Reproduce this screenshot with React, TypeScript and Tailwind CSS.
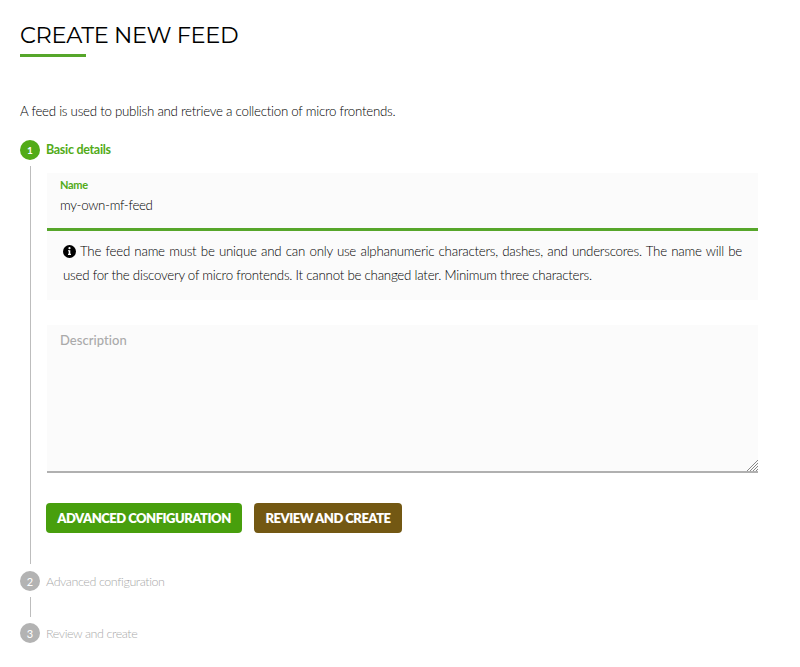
import { useState } from 'react';

interface StepProps {
  index: number;
  title: string;
}

function PendingStep({ index, title }: StepProps) {
  return (
    <div className="flex h-[20px] items-center gap-[6px]">
      <span className="flex size-[20px] items-center justify-center rounded-full bg-[#b3b3b3] text-[11px] leading-none text-white">
        {index}
      </span>
      <span className="pt-px text-[12.5px] leading-[18px] font-light tracking-[-0.41px] text-[#aaa]">{title}</span>
    </div>
  );
}

function InfoIcon() {
  return (
    <svg viewBox="0 0 13 13" className="mr-[4px] inline-block size-[13px] align-[-2px]">
      <circle cx="6.5" cy="6.5" r="6.5" fill="#000" />
      <circle cx="6.5" cy="3.2" r="1.1" fill="#fff" />
      <path d="M5 5.2h2.3v3.6H8v1.1H5V8.8h.7V6.3H5z" fill="#fff" />
    </svg>
  );
}

export default function App() {
  const [feedName, setFeedName] = useState<string>('my-own-mf-feed');
  const [description, setDescription] = useState<string>('');

  return (
    <div className="h-[667px] w-[800px] overflow-hidden bg-white pl-[20px] font-[Lato,sans-serif] text-black">
      <h1 className="h-[54px] pt-[18px] font-[Montserrat,sans-serif] text-[22.5px] leading-[34px] tracking-[-0.35px] whitespace-nowrap">
        CREATE NEW FEED
      </h1>
      <div className="h-[3px] w-[66px] bg-[#56a62a]" />
      <p className="mt-[44px] text-[13.3px] leading-[20px] font-light tracking-[-0.255px]">
        A feed is used to publish and retrieve a collection of micro frontends.
      </p>

      <div className="mt-[19px] flex h-[20px] items-center gap-[6px]">
        <span className="flex size-[20px] items-center justify-center rounded-full bg-[#52ab18] text-[10px] font-bold text-white">
          1
        </span>
        <span className="text-[12.5px] font-bold tracking-[-0.3px] text-[#52ab18]">Basic details</span>
      </div>

      <div className="mt-[6px] ml-[10px] h-[398px] border-l border-[#bdbdbd] pt-[7px] pl-[16px]">
        <label className="block h-[58px] w-[711px] border-b-[3px] border-[#56a62a] bg-[#fbfbfb] px-[13px] pt-[5px]">
          <span className="block text-[11px] leading-[14px] font-bold tracking-[-0.3px] text-[#52ab18]">Name</span>
          <input
            value={feedName}
            onChange={(e) => setFeedName(e.target.value)}
            className="block h-[26px] w-full text-[13.3px] font-light tracking-[-0.32px] outline-none"
          />
        </label>
        <p className="h-[69px] w-[711px] bg-[#fbfbfb] px-[16px] pt-[8px] text-justify text-[13.3px] leading-[24px] font-light tracking-[-0.24px]">
          <InfoIcon />
          The feed name must be unique and can only use alphanumeric characters, dashes, and underscores. The name will be
          used for the discovery of micro frontends. It cannot be changed later. Minimum three characters.
        </p>
        <div className="relative mt-[25px] h-[148px] w-[711px]">
          <textarea
            value={description}
            onChange={(e) => setDescription(e.target.value)}
            placeholder="Description"
            className="block h-[148px] w-full resize-none border-b-2 border-[#b0b0b0] bg-[#fbfbfb] px-[13px] pt-[6px] text-[13px] font-medium tracking-[0.05px] outline-none placeholder:text-[#aaa]"
          />
          <svg viewBox="0 0 12 12" className="absolute right-0 bottom-[2px] size-[12px]">
            <path d="M1 12L12 1M4 12l8-8M7 12l5-5M10 12l2-2" stroke="#888" strokeWidth="1" fill="none" />
          </svg>
        </div>
        <div className="mt-[30px] -ml-px flex gap-[12px] text-[13px] font-extrabold text-white">
          <button className="h-[30px] w-[196px] rounded-[4px] bg-[#489f0d] pt-px tracking-[-0.5px] whitespace-nowrap">
            ADVANCED CONFIGURATION
          </button>
          <button className="h-[30px] w-[148px] rounded-[4px] bg-[#735813] pt-px tracking-[-0.5px] whitespace-nowrap">
            REVIEW AND CREATE
          </button>
        </div>
      </div>

      <div className="mt-[7px]">
        <PendingStep index={2} title="Advanced configuration" />
        <div className="mt-[6px] mb-[6px] ml-[10px] h-[20px] w-px bg-[#bdbdbd]" />
        <PendingStep index={3} title="Review and create" />
      </div>
    </div>
  );
}
